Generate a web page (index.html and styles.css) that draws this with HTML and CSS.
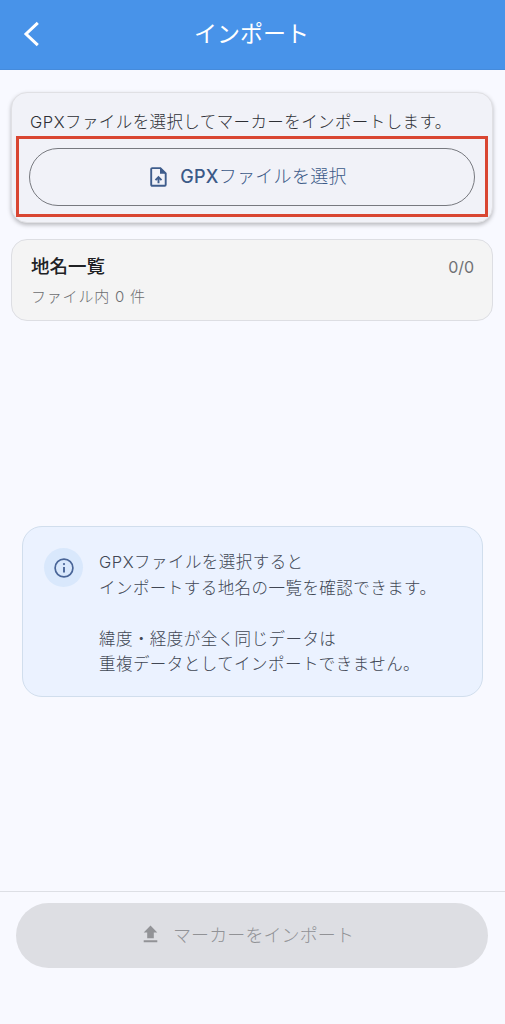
FILE: index.html
```html
<!DOCTYPE html>
<html lang="ja">
<head>
<meta charset="utf-8">
<title>インポート</title>
<link rel="stylesheet" href="styles.css">
</head>
<body>
<div class="screen">
  <header class="app-bar">
    <svg class="back" width="16" height="26" viewBox="0 0 16 26"><path d="M14.8 1.8 3 13l11.8 11.2"/></svg>
    <h1 class="title">インポート</h1>
  </header>
  <main class="content">
    <section class="card picker">
      <p class="picker-text"><span class="latin">GPX</span>ファイルを選択してマーカーをインポートします。</p>
      <button class="pick-button">
        <svg width="17" height="20" viewBox="0 0 17 20"><path class="line" d="M2.2 1.1h8.2l5.3 5.2v11.5a1 1 0 0 1-1 1H2.2a1 1 0 0 1-1-1V2.1a1 1 0 0 1 1-1Z"/><path class="fill" d="M10 .7v6h6Z"/><path class="line" d="M8.5 16.2v-5.6M5.5 13.2l3-3 3 3"/></svg>
        <span><span class="latin-medium">GPX</span>ファイルを選択</span>
      </button>
      <div class="highlight"></div>
    </section>
    <section class="card places">
      <div>
        <h2 class="places-title">地名一覧</h2>
        <p class="places-sub">ファイル内 0 件</p>
      </div>
      <span class="count">0/0</span>
    </section>
    <section class="info">
      <div class="info-badge">
        <svg width="20" height="20" viewBox="0 0 20 20"><circle class="ring" cx="10" cy="10" r="8.9"/><path class="stem" d="M10 9v5.5"/><circle class="dot" cx="10" cy="6.1" r="1.1"/></svg>
      </div>
      <p class="info-text"><span class="latin">GPX</span>ファイルを選択すると<br>インポートする地名の一覧を確認できます。<br><br>緯度・経度が全く同じデータは<br>重複データとしてインポートできません。</p>
    </section>
  </main>
  <footer class="bottom">
    <button class="import-button" disabled>
      <svg width="15" height="18" viewBox="0 0 15 18"><path d="M4.2 13.2V7.4H.7L7.5.5l6.8 6.9h-3.5v5.8ZM.7 15.2h13.6v2H.7Z"/></svg>
      <span>マーカーをインポート</span>
    </button>
  </footer>
</div>
</body>
</html>
```
FILE: styles.css
```css
* { box-sizing: border-box; margin: 0; padding: 0; }
body {
  background: #f8f9ff;
  font-family: Inter, "Noto Sans CJK JP", sans-serif;
  font-weight: 300;
}
button { font: inherit; border: 0; }
svg { flex: none; display: block; }
.latin { font-weight: 350; letter-spacing: .5px; }
.latin-medium { font-weight: 450; }
.screen { width: 505px; height: 1024px; display: flex; flex-direction: column; }
.app-bar {
  height: 70px;
  background: #4893e9;
  color: #fff;
  display: grid;
  grid-template-columns: 56px 1fr 56px;
  align-items: center;
  border-bottom: 1px solid #458bdc;
}
.back { margin: 0 0 2px 23px; fill: none; stroke: #fff; stroke-width: 3; }
.title { text-align: center; font-size: 23px; line-height: 30px; font-weight: 400; padding: 0 2px 2px 0; }
.content { flex: 1; padding: 22px 12px 0 11px; }
.card { border-radius: 16px; }
.picker {
  position: relative;
  height: 131px;
  padding: 17px 17px 0;
  background: #f1f2f8;
  border: 1px solid #e0e0e4;
  box-shadow: 0 2px 4px rgba(0, 0, 0, .26);
}
.picker-text { font-size: 16.5px; line-height: 24px; letter-spacing: .4px; padding-left: 1px; color: #2d2f35; white-space: nowrap; }
.pick-button {
  width: 446px;
  height: 58px;
  margin-top: 14px;
  padding: 0 7px 4px 0;
  border: 1px solid #77797f;
  border-radius: 29px;
  background: transparent;
  color: #3c5a88;
  display: flex;
  align-items: center;
  justify-content: center;
  gap: 13px;
  font-size: 18px;
  letter-spacing: .3px;
}
.pick-button svg { margin-top: 3px; }
.pick-button .line { fill: none; stroke: #3f5d8c; stroke-width: 1.9; }
.pick-button .fill { fill: #3f5d8c; }
.highlight {
  position: absolute;
  left: 4px;
  top: 43px;
  width: 472px;
  height: 81px;
  border: 3px solid #d94632;
}
.places {
  height: 82px;
  margin-top: 16px;
  padding: 13px 18px 0 19px;
  background: #f4f4f4;
  border: 1px solid #dddee3;
  display: flex;
  justify-content: space-between;
}
.places-title { font-size: 18.5px; line-height: 26px; font-weight: 500; color: #202124; }
.places-sub { font-size: 15px; line-height: 22px; margin-top: 7px; color: #6c6d70; letter-spacing: .8px; }
.count { font-size: 16px; line-height: 28px; color: #707174; font-weight: 400; letter-spacing: -.1px; }
.info {
  height: 171px;
  margin: 205px 10px 0 11px;
  padding: 23px 21px 0;
  background: #ebf2ff;
  border: 1px solid #d1deed;
  border-radius: 20px;
  display: flex;
  gap: 16px;
}
.info-badge {
  width: 39px;
  height: 39px;
  margin: -2px 0 0 0;
  border-radius: 50%;
  background: #d9e8fc;
  display: grid;
  place-items: center;
  flex: none;
}
.ring { fill: none; stroke: #496598; stroke-width: 1.7; }
.stem { stroke: #496598; stroke-width: 1.9; }
.dot { fill: #496598; }
.info-text { font-size: 16.5px; line-height: 25.5px; letter-spacing: .45px; color: #414754; white-space: nowrap; }
.bottom { height: 133px; border-top: 1px solid #dddfe5; padding: 11px 17px 0 16px; }
.import-button {
  width: 100%;
  height: 65px;
  padding: 0 7px 3px 0;
  border-radius: 33px;
  background: #dddee3;
  color: #919296;
  display: flex;
  align-items: center;
  justify-content: center;
  gap: 15px;
  font-size: 18px;
  letter-spacing: .1px;
}
.import-button svg { fill: #929397; }
```
